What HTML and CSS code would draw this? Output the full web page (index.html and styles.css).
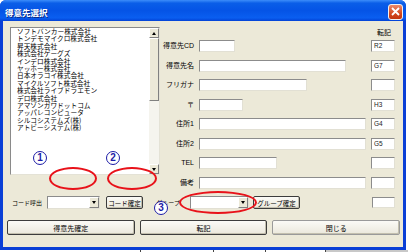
FILE: index.html
```html
<!DOCTYPE html>
<html lang="ja">
<head>
    <meta charset="UTF-8">
    <title>得意先選択</title>
    <link rel="stylesheet" href="styles.css">
</head>
<body>
    <div class="window">
        <div class="titlebar">
            <span class="title">得意先選択</span>
            <span class="close-btn">
                <svg width="9" height="9" viewBox="0 0 9 9"><path d="M1 1L8 8M8 1L1 8" stroke="#fff" stroke-width="1.8"/></svg>
            </span>
        </div>
        <div class="body">
            <div class="main">
                <div class="listbox">
                    <ul class="items">
                        <li>ソフトバンカー株式会社</li>
                        <li>トンデモマイクロ株式会社</li>
                        <li>昇天株式会社</li>
                        <li>株式会社ゲーグズ</li>
                        <li>インデロ株式会社</li>
                        <li>ヤッホー株式会社</li>
                        <li>日本オラコイ株式会社</li>
                        <li>マイクルソフト株式会社</li>
                        <li>株式会社ライブドラエモン</li>
                        <li>デロ株式会社</li>
                        <li>アマゾンガワドットコム</li>
                        <li>アッパレコンピュータ</li>
                        <li>シルコシステムズ(株)</li>
                        <li>アトビーシステム(株)</li>
                    </ul>
                    <div class="scrollbar">
                        <div class="sb-btn"><span class="arrow-up"></span></div>
                        <div class="sb-thumb"></div>
                        <div class="sb-track"></div>
                        <div class="sb-btn"><span class="arrow-down"></span></div>
                    </div>
                </div>
                <div class="form">
                    <div class="form-head">転記</div>
                    <div class="fields">
                        <label>得意先CD</label><div class="input w-cd"></div><div class="input">R2</div>
                        <label>得意先名</label><div class="input w-name"></div><div class="input">G7</div>
                        <label>フリガナ</label><div class="input w-kana"></div><div class="input"></div>
                        <label>〒</label><div class="input w-zip"></div><div class="input">H3</div>
                        <label>住所1</label><div class="input w-full"></div><div class="input">G4</div>
                        <label>住所2</label><div class="input w-full"></div><div class="input">G5</div>
                        <label>TEL</label><div class="input w-tel"></div><div class="input"></div>
                        <label>備考</label><div class="input w-full"></div><div class="input"></div>
                    </div>
                </div>
            </div>
            <div class="toolbar">
                <span class="tb-label">コード呼出</span>
                <div class="combo code-combo"><span class="combo-btn"><span class="arrow-down"></span></span></div>
                <button class="btn code-btn">コード確定</button>
                <span class="tb-label group-label">グループ</span>
                <div class="combo group-combo"><span class="combo-btn"><span class="arrow-down"></span></span></div>
                <button class="btn group-btn">グループ確定</button>
                <div class="input tb-small"></div>
            </div>
            <div class="actions">
                <button class="btn big">得意先確定</button>
                <button class="btn big">転記</button>
                <button class="btn big light">閉じる</button>
            </div>
        </div>

        <!-- 注記 -->
        <div class="ellipse e1"></div>
        <div class="ellipse e2"></div>
        <div class="ellipse e3"></div>
        <div class="num n1">1</div>
        <div class="num n2">2</div>
        <div class="num n3">3</div>
    </div>
    <div class="below">
        <div></div><div></div><div></div><div></div><div class="gray"></div>
    </div>
</body>
</html>
```

FILE: styles.css
```css
body {
    margin: 0;
    background: #fff;
    font-family: "Liberation Sans", "Noto Sans CJK JP", sans-serif;
    font-size: 7px;
    color: #000;
}

.window {
    position: relative;
    width: 406px;
    height: 250px;
    background: #0a3fd6;
    border-radius: 6px 6px 0 0;
    overflow: hidden;
}

.titlebar {
    height: 21px;
    display: flex;
    align-items: center;
    justify-content: space-between;
    padding: 0 3px 0 5px;
    background: linear-gradient(#3c8dfa 0%, #0a5ee8 15%, #0554e6 50%, #0a5ef0 85%, #0342d6 100%);
}

.title {
    color: #fff;
    font-family: "Noto Sans CJK JP", sans-serif;
    font-weight: bold;
    font-size: 8.5px;
    text-shadow: 1px 1px 0 #0b2a86;
    padding-top: 2px;
}

.close-btn {
    width: 13px;
    height: 14px;
    margin-top: 2px;
    border: 1px solid #f2f2f2;
    border-radius: 3px;
    background: linear-gradient(#e98a6c, #d4491f 60%, #c2340e);
    display: flex;
    align-items: center;
    justify-content: center;
}

.body {
    margin: 0 3px;
    height: 226px;
    padding: 6px 8px 0 7px;
    box-sizing: border-box;
    background: #ece9d8;
}

.main {
    display: flex;
    height: 161.5px;
}

/* リスト */
.listbox {
    width: 150px;
    height: 148px;
    box-sizing: border-box;
    border: 1px solid #7f9db9;
    border-color: #8a8a8a #e4e2d6 #e4e2d6 #8a8a8a;
    background: #fff;
    display: flex;
}

.items {
    flex: 1;
    list-style: none;
    margin: 0;
    padding: 0 0 0 6px;
    font-family: "Noto Sans CJK JP", sans-serif;
    font-size: 6.7px;
    line-height: 7.4px;
    overflow: hidden;
}

.scrollbar {
    width: 10px;
    display: flex;
    flex-direction: column;
    background: #f5f4ee;
}

.sb-btn {
    height: 10px;
    box-sizing: border-box;
    border: 1px solid;
    border-color: #fff #808080 #808080 #fff;
    background: #ece9d8;
    display: flex;
    align-items: center;
    justify-content: center;
}

.sb-thumb {
    height: 63px;
    box-sizing: border-box;
    border: 1px solid;
    border-color: #fff #808080 #808080 #fff;
    background: #ece9d8;
}

.sb-track {
    flex: 1;
}

.arrow-up, .arrow-down {
    width: 0;
    height: 0;
    border-left: 2.5px solid transparent;
    border-right: 2.5px solid transparent;
}

.arrow-up { border-bottom: 3px solid #000; }
.arrow-down { border-top: 3px solid #000; }

/* 入力欄 */
.form {
    margin-left: 3px;
    width: 232px;
}

.form-head {
    height: 13px;
    line-height: 9px;
    padding-top: 1px;
    box-sizing: border-box;
    text-align: right;
    padding-right: 4px;
    font-family: "Noto Sans CJK JP", sans-serif;
}

.fields {
    display: grid;
    grid-template-columns: 31px 167px 24px;
    grid-auto-rows: 12px;
    column-gap: 5px;
    row-gap: 7.5px;
    align-items: center;
}

.fields label {
    text-align: right;
    white-space: nowrap;
    line-height: 12px;
}

.input {
    height: 12px;
    box-sizing: border-box;
    background: #fff;
    border: 1px solid;
    border-color: #8c8c8c #e2e0d4 #e2e0d4 #8c8c8c;
    font-size: 6.5px;
    line-height: 10px;
    padding-left: 2px;
    color: #222;
}

.w-cd { width: 36px; }
.w-name { width: 147px; }
.w-kana { width: 108px; }
.w-zip { width: 44px; }
.w-tel { width: 78px; }
.w-full { width: 167px; }

/* 下段 */
.toolbar {
    display: flex;
    align-items: center;
    height: 13px;
    margin-top: 7.5px;
    padding-left: 2px;
}

.tb-label {
    font-size: 6px;
    width: 30px;
    white-space: nowrap;
}

.combo {
    height: 13px;
    box-sizing: border-box;
    background: #fff;
    border: 1px solid;
    border-color: #8c8c8c #e2e0d4 #e2e0d4 #8c8c8c;
    display: flex;
    justify-content: flex-end;
    align-items: stretch;
}

.combo-btn {
    width: 10px;
    background: #ece9d8;
    border: 1px solid;
    border-color: #fff #808080 #808080 #fff;
    box-sizing: border-box;
    display: flex;
    align-items: center;
    justify-content: center;
}

.code-combo { width: 53px; margin-left: 5px; }

.btn {
    font-family: "Noto Sans CJK JP", sans-serif;
    font-size: 6.5px;
    padding: 0;
    color: #000;
    background: linear-gradient(#fbfaf6, #ebe8dc);
    border: 1px solid #3c3c3c;
    border-radius: 2px;
    box-shadow: inset -1px -1px 0 #c3bfae;
}

.code-btn { width: 37px; height: 13px; margin-left: 6px; }

.group-label {
    width: 37px;
    text-align: right;
}

.group-combo { width: 59px; margin-left: 10px; }

.group-btn { width: 47px; height: 13px; margin-left: 4px; }

.tb-small {
    width: 23px;
    height: 11px;
    margin-left: auto;
}

.actions {
    display: flex;
    gap: 5px;
    margin: 11px 0 0 -3px;
    margin-right: -5px;
}

.btn.big {
    flex: 1;
    height: 15px;
    font-size: 7px;
}

.btn.light {
    border-color: #9a9a9a;
}

/* 注記 */
.ellipse {
    position: absolute;
    border: 2px solid #e8121a;
    border-radius: 50%;
    box-sizing: border-box;
}

.e1 { left: 49px; top: 167px; width: 48px; height: 23px; }
.e2 { left: 107px; top: 167px; width: 50px; height: 23px; }
.e3 { left: 179px; top: 191px; width: 78px; height: 23px; }

.num {
    position: absolute;
    width: 14px;
    height: 14px;
    box-sizing: border-box;
    border: 1.5px solid #1b1ba6;
    border-radius: 50%;
    background: #fff;
    color: #1b1ba6;
    font-family: "Liberation Sans", sans-serif;
    font-weight: bold;
    font-size: 10px;
    line-height: 11px;
    text-align: center;
}

.n1 { left: 33px; top: 151px; }
.n2 { left: 106px; top: 151px; }
.n3 { left: 154px; top: 201px; }

.below {
    display: grid;
    grid-template-columns: 140px 73px 52px 60px 1fr;
    height: 2px;
}

.below div + div {
    border-left: 1px solid #444;
}

.below .gray {
    background: #c8c8c8;
}
```
